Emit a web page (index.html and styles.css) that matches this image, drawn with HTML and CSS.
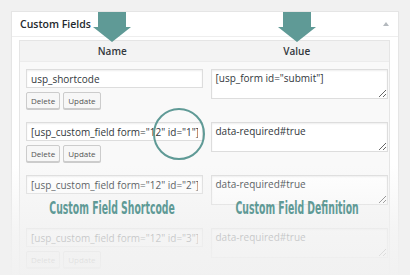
FILE: index.html
```html
<!DOCTYPE html>
<html>
<head lang="en">
    <meta charset="UTF-8">
    <title>Custom Fields</title>
    <link rel="stylesheet" href="styles.css">
</head>
<body>
<div class="page">
    <div class="postbox">
        <div class="postbox-head">
            <h2>Custom Fields</h2>
            <span class="toggle"></span>
        </div>
        <div class="inside">
            <table class="list-table">
                <thead>
                <tr><th>Name</th><th>Value</th></tr>
                </thead>
                <tbody>
                <tr>
                    <td class="left">
                        <input type="text" value="usp_shortcode">
                        <div class="actions"><button>Delete</button><button>Update</button></div>
                    </td>
                    <td class="right"><textarea>[usp_form id="submit"]</textarea></td>
                </tr>
                <tr>
                    <td class="left">
                        <input type="text" value='[usp_custom_field form="12" id="1"]'>
                        <div class="actions"><button>Delete</button><button>Update</button></div>
                    </td>
                    <td class="right"><textarea>data-required#true</textarea></td>
                </tr>
                <tr>
                    <td class="left">
                        <input type="text" value='[usp_custom_field form="12" id="2"]'>
                        <div class="actions covered"><button>Delete</button><button>Update</button></div>
                    </td>
                    <td class="right"><textarea>data-required#true</textarea></td>
                </tr>
                <tr>
                    <td class="left">
                        <input type="text" value='[usp_custom_field form="12" id="3"]'>
                        <div class="actions"><button>Delete</button><button>Update</button></div>
                    </td>
                    <td class="right"><textarea>data-required#true</textarea></td>
                </tr>
                </tbody>
            </table>
        </div>
    </div>

    <div class="fade"></div>

    <!-- callouts drawn over the screenshot -->
    <svg class="arrow arrow-name" width="38" height="30" viewBox="0 0 38 30"><polygon points="5,0 33,0 33,15 38,15 19,30 0,15 5,15"/></svg>
    <svg class="arrow arrow-value" width="38" height="30" viewBox="0 0 38 30"><polygon points="5,0 33,0 33,15 38,15 19,30 0,15 5,15"/></svg>
    <div class="lens"></div>
    <div class="labels">
        <div class="label"><span>Custom Field Shortcode</span></div>
        <div class="label"><span>Custom Field Definition</span></div>
    </div>
</div>
</body>
</html>
```

FILE: styles.css
```css
body{
    margin: 0;
    background: #f1f1f1;
    font-family: "Open Sans", "Liberation Sans", sans-serif;
    color: #32373c;
}
.page{
    position: relative;
    width: 410px;
    height: 275px;
    overflow: hidden;
    box-sizing: border-box;
    padding: 11px 11px 0 11px;
}
.postbox{
    background: #fff;
    border: 1px solid #e5e5e5;
    box-shadow: 0 1px 1px rgba(0, 0, 0, 0.04);
}
.postbox-head{
    display: flex;
    align-items: center;
    justify-content: space-between;
    height: 24px;
    padding: 0 9px 0 8px;
    border-bottom: 1px solid #eee;
}
.postbox-head h2{
    margin: 0;
    font-size: 10.5px;
    font-weight: 600;
    color: #23282d;
}
.toggle{
    width: 0;
    height: 0;
    border-left: 3px solid transparent;
    border-right: 3px solid transparent;
    border-bottom: 4px solid #b4b9be;
}
.inside{
    padding: 3px 8px 0 7px;
}
.list-table{
    width: 100%;
    border-collapse: separate;
    border-spacing: 0;
    border: 1px solid #e5e5e5;
    table-layout: fixed;
}
.list-table th{
    height: 20px;
    background: #f3f3f3;
    border-bottom: 1px solid #ececec;
    font-size: 10px;
    font-weight: 600;
    color: #32373c;
    text-align: center;
    padding: 0;
}
.list-table td{
    background: #f9f9f9;
    vertical-align: top;
}
.list-table td.left{
    padding: 7px 2px 6px 6px;
}
.list-table td.right{
    padding: 7px 1px 6px 6px;
}
.list-table input,
.list-table textarea{
    display: block;
    width: 100%;
    box-sizing: border-box;
    margin: 0;
    border: 1px solid #ddd;
    background: #fff;
    box-shadow: inset 0 1px 2px rgba(0, 0, 0, 0.07);
    font-family: "Open Sans", "Liberation Sans", sans-serif;
    font-size: 10px;
    color: #32373c;
    outline: none;
}
.list-table input{
    height: 19px;
    padding: 0 4px;
}
.list-table textarea{
    height: 30px;
    padding: 2px 4px;
    line-height: 13px;
    resize: vertical;
}
.actions{
    display: flex;
    gap: 3px;
    margin-top: 4px;
}
/* buttons under the caption are painted out in the shot */
.actions.covered{
    visibility: hidden;
}
.actions button{
    height: 17px;
    padding: 0 4px;
    border: 1px solid #ccc;
    border-radius: 2px;
    background: #f7f7f7;
    box-shadow: 0 1px 0 #ccc;
    font-family: "Open Sans", "Liberation Sans", sans-serif;
    font-size: 8px;
    color: #555;
}
.fade{
    position: absolute;
    left: 0;
    top: 0;
    width: 100%;
    height: 100%;
    background: linear-gradient(to bottom, rgba(241, 241, 241, 0) 165px, rgba(241, 241, 241, 0.75) 232px, rgba(241, 241, 241, 0.96) 275px);
}
.arrow{
    position: absolute;
    top: 12px;
    fill: #5f9a96;
}
.arrow-name{
    left: 93px;
}
.arrow-value{
    left: 278px;
}
.lens{
    position: absolute;
    left: 153px;
    top: 108px;
    width: 52px;
    height: 52px;
    box-sizing: border-box;
    border: 2px solid #5f9a96;
    border-radius: 50%;
}
.labels{
    position: absolute;
    left: 20px;
    top: 197px;
    width: 370px;
    display: flex;
}
.label{
    flex: 1;
    min-width: 0;
    display: flex;
    justify-content: center;
    white-space: nowrap;
}
.label span{
    flex: none;
    font-family: "Liberation Sans Narrow", "DejaVu Sans Condensed", sans-serif;
    font-weight: bold;
    font-size: 18px;
    line-height: 22px;
    color: #5f9a96;
    transform: scaleX(0.575);
}
```
